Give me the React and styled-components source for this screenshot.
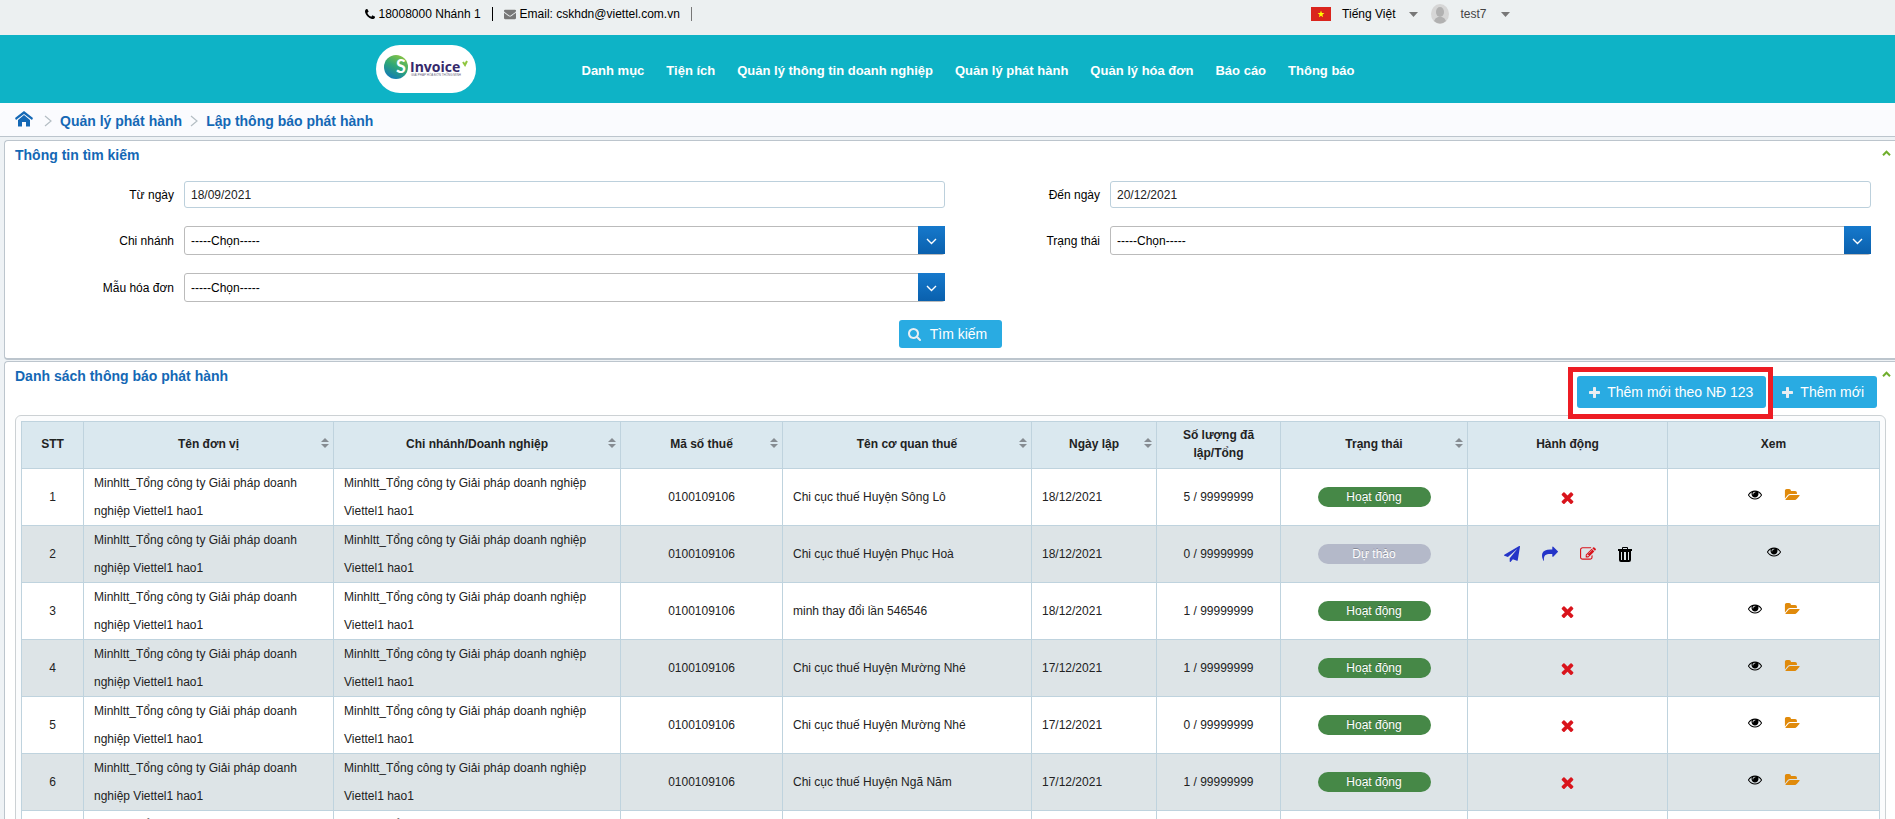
import React from "react";
import styled, { createGlobalStyle } from "styled-components";

const GlobalStyle = createGlobalStyle`
  *, *::before, *::after { box-sizing: border-box; }
  body {
    margin: 0;
    background: #eef2f5;
    color: #000;
    font: 12px/20px "Liberation Sans", Arial, sans-serif;
  }
  button, input, select { font: inherit; color: inherit; }
  a { color: inherit; text-decoration: none; }
`;

/* ---------- icons ---------- */

const Glyph = styled.svg`
  display: block;
  flex: none;
  width: ${(p) => p.$w || p.$size}px;
  height: ${(p) => p.$size}px;
  fill: currentColor;
`;

const PATHS = {
  phone:
    "M1600 1240q0 27-10 70.5t-21 68.5q-21 50-122 106-94 51-186 51-27 0-53-3.5t-57.5-12.5-47-14.5-55.5-20.5-49-18q-98-35-175-83-127-79-264-216t-216-264q-48-77-83-175-3-9-18-49t-20.5-55.5-14.5-47-12.5-57.5-3.5-53q0-92 51-186 56-101 106-122 25-11 68.5-21t70.5-10q14 0 21 3 18 6 53 76 11 19 30 54t35 63.5 31 53.5q3 4 17.5 25t21.5 35.5 7 28.5q0 20-28.5 50t-62 55-62 53-28.5 46q0 9 5 22.5t8.5 20.5 14 24 11.5 19q76 137 174 235t235 174q2 1 19 11.5t24 14 20.5 8.5 22.5 5q18 0 46-28.5t53-62 55-62 50-28.5q14 0 28.5 7t35.5 21.5 25 17.5q25 15 53.5 31t63.5 35 54 30q70 35 76 53 3 7 3 21z",
  envelope:
    "M1792 710v794q0 66-47 113t-113 47h-1472q-66 0-113-47t-47-113v-794q44 49 101 87 362 246 497 345 57 42 92.5 65.5t94.5 48 110 24.5h2q51 0 110-24.5t94.5-48 92.5-65.5q170-123 498-345 57-39 100-87zm0-294q0 79-49 151t-122 123q-376 261-468 325-10 7-42.5 31t-54 38.5-52 32.5-57.5 27-50 9h-2q-23 0-50-9t-57.5-27-52-32.5-54-38.5-42.5-31q-91-64-262-182.5t-205-142.5q-62-42-117-115.5t-55-136.5q0-78 41.5-130t118.5-52h1472q65 0 112.5 47t47.5 113z",
  search:
    "M1216 832q0-185-131.5-316.5t-316.5-131.5-316.5 131.5-131.5 316.5 131.5 316.5 316.5 131.5 316.5-131.5 131.5-316.5zm512 832q0 52-38 90t-90 38q-54 0-90-38l-343-342q-179 124-399 124-143 0-273.5-55.5t-225-150-150-225-55.5-273.5 55.5-273.5 150-225 225-150 273.5-55.5 273.5 55.5 225 150 150 225 55.5 273.5q0 220-124 399l343 343q37 37 37 90z",
  plus:
    "M1600 736v192q0 40-28 68t-68 28h-416v416q0 40-28 68t-68 28h-192q-40 0-68-28t-28-68v-416h-416q-40 0-68-28t-28-68v-192q0-40 28-68t68-28h416v-416q0-40 28-68t68-28h192q40 0 68 28t28 68v416h416q40 0 68 28t28 68z",
  times:
    "M1490 1322q0 40-28 68l-136 136q-28 28-68 28t-68-28l-294-294-294 294q-28 28-68 28t-68-28l-136-136q-28-28-28-68t28-68l294-294-294-294q-28-28-28-68t28-68l136-136q28-28 68-28t68 28l294 294 294-294q28-28 68-28t68 28l136 136q28 28 28 68t-28 68l-294 294 294 294q28 28 28 68z",
  eye:
    "M1664 960q-152-236-381-353 61 104 61 225 0 185-131.5 316.5t-316.5 131.5-316.5-131.5-131.5-316.5q0-121 61-225-229 117-381 353 133 205 333.5 326.5t434.5 121.5 434.5-121.5 333.5-326.5zm-720-384q0-20-14-34t-34-14q-125 0-214.5 89.5t-89.5 214.5q0 20 14 34t34 14 34-14 14-34q0-86 61-147t147-61q20 0 34-14t14-34zm848 384q0 34-20 69-140 230-376.5 368.5t-499.5 138.5-499.5-139-376.5-368q-20-35-20-69t20-69q140-229 376.5-368t499.5-139 499.5 139 376.5 368q20 35 20 69z",
  folder:
    "M1943 952q0 31-31 66l-336 396q-43 51-120.5 86.5t-143.5 35.5h-1088q-34 0-60.5-13t-26.5-43q0-31 31-66l336-396q43-51 120.5-86.5t143.5-35.5h1088q34 0 60.5 13t26.5 43zm-343-344v160h-832q-94 0-197 47.5t-164 119.5l-337 396-5 6q0-4-.5-12.5t-.5-12.5v-960q0-92 66-158t158-66h320q92 0 158 66t66 158v32h544q92 0 158 66t66 158z",
  plane:
    "M1764 11q33 24 27 64l-256 1536q-5 29-32 45-14 8-31 8-11 0-24-5l-453-185-242 295q-18 23-49 23-13 0-22-4-19-7-30.5-23.5t-11.5-36.5v-349l864-1059-1069 925-395-162q-37-14-40-55-2-40 32-59l1664-960q15-9 32-9 20 0 36 11z",
  share:
    "M1792 640q0 26-19 45l-512 512q-19 19-45 19t-45-19-19-45v-256h-224q-98 0-175.5 6t-154 21.5-133 42.5-105.5 69.5-80 101-48.5 138.5-17.5 181q0 55 5 123 0 6 2.5 23.5t2.5 26.5q0 15-8.5 25t-23.5 10q-16 0-28-17-7-9-13-22t-13.5-30-10.5-24q-127-285-127-451 0-199 53-333 162-403 875-403h224v-256q0-26 19-45t45-19 45 19l512 512q19 19 19 45z",
  edit:
    "M888 1184l116-116-152-152-116 116v56h96v96h56zm440-720q-16-16-33 1l-350 350q-17 17-1 33t33-1l350-350q17-17 1-33zm80 594v190q0 119-84.5 203.5t-203.5 84.5h-832q-119 0-203.5-84.5t-84.5-203.5v-832q0-119 84.5-203.5t203.5-84.5h832q63 0 117 25 15 7 18 23 3 17-9 29l-49 49q-14 14-32 8-23-6-45-6h-832q-66 0-113 47t-47 113v832q0 66 47 113t113 47h832q66 0 113-47t47-113v-126q0-13 9-22l64-64q15-15 35-7t20 29zm-96-738l288 288-672 672h-288v-288zm444 132l-92 92-288-288 92-92q28-28 68-28t68 28l152 152q28 28 28 68t-28 68z",
};

const BOXES = {
  phone: "192 128 1408 1408",
  envelope: "0 0 1792 1792",
  search: "64 128 1664 1664",
  plus: "192 128 1408 1408",
  times: "302 238 1188 1316",
  eye: "0 64 1792 1792",
  folder: "0 0 1943 1792",
  plane: "0 0 1792 1792",
  share: "0 0 1792 1792",
  edit: "0 0 1792 1792",
};

const Icon = ({ name, size, w }) => (
  <Glyph $size={size} $w={w} viewBox={BOXES[name]} aria-hidden="true">
    <path d={PATHS[name]} />
  </Glyph>
);

const TrashIcon = () => (
  <Glyph $w={14} $size={15} viewBox="0 0 14 15" aria-hidden="true">
    <path d="M4 2V1q0-1 1-1h4q1 0 1 1v1h4v2H0V2zm1 0h4V1H5z" />
    <path
      fillRule="evenodd"
      d="M1 4h12v9q0 2-2 2H3q-2 0-2-2zM3 5v8h1V5zm3 0v8h2V5zm4 0v8h1V5z"
    />
  </Glyph>
);

const HomeIcon = () => (
  <Glyph $w={18} $size={16} viewBox="0 0 18 16" aria-hidden="true">
    <path d="M9 0 0 7l1 2 8-6 8 6 1-2z" />
    <path d="M9 4 3 9v6.500h4V11h4v4.500h4V9z" />
  </Glyph>
);

const Separator = () => (
  <Glyph $w={8} $size={12} viewBox="0 0 8 12" aria-hidden="true">
    <path d="M1 1l6 5-6 5" fill="none" stroke="#b4bec4" strokeWidth="1.200" />
  </Glyph>
);

const Caret = () => (
  <Glyph $w={9} $size={5} viewBox="0 0 9 5" aria-hidden="true">
    <path d="M0 0h9L4.500 5z" fill="#777" />
  </Glyph>
);

const Flag = () => (
  <Glyph $w={20} $size={14} viewBox="0 0 20 14" role="img" aria-label="Việt Nam">
    <path d="M0 0h20v14H0z" fill="#da251d" />
    <path
      d="M10 3.600l.9 2.500h2.500l-2 1.600.7 2.600-2.100-1.500-2.100 1.500.7-2.600-2-1.600h2.500z"
      fill="#ff0"
    />
  </Glyph>
);

const Avatar = () => (
  <Glyph $w={18} $size={20} viewBox="0 0 18 20" aria-hidden="true">
    <ellipse cx="9" cy="10" rx="9" ry="10" fill="#d6d6d6" />
    <ellipse cx="9" cy="8" rx="4" ry="5" fill="#b1b1b1" />
    <path d="M3 17q1-3 4-4h4q3 1 4 4-6 5-12 0z" fill="#b1b1b1" />
  </Glyph>
);

const Logo = () => (
  <svg width="84" height="30" viewBox="0 0 84 30" role="img" aria-label="SInvoice">
    <defs>
      <linearGradient id="ball" x1="0.8" y1="0" x2="0.3" y2="1">
        <stop offset="0" stopColor="#8fc63f" />
        <stop offset="0.5" stopColor="#2fa876" />
        <stop offset="1" stopColor="#1279b8" />
      </linearGradient>
    </defs>
    <circle cx="12" cy="14" r="12" fill="url(#ball)" />
    <text x="12" y="20" fontFamily="Lato, sans-serif" fontSize="18" fontWeight="700" fill="#fff">
      S
    </text>
    <text x="26" y="19" fontFamily="Open Sans, sans-serif" fontSize="14" fontWeight="700" fill="#35296b">
      Invoice
    </text>
    <path d="M79 9l2 3 2-4" fill="none" stroke="#8fc63f" strokeWidth="2" />
    <text x="27" y="23" fontFamily="Liberation Sans, sans-serif" fontSize="3" fill="#6a6a80">
      GIẢI PHÁP HÓA ĐƠN THÔNG MINH
    </text>
  </svg>
);

/* ---------- header ---------- */

const TopBar = styled.div`
  height: 35px;
  background: #ecf0f1;
`;

const Container = styled.div`
  display: flex;
  max-width: 1170px;
  margin: 0 auto;
  padding: 0 23px 0 2px;
`;

const TopRow = styled(Container)`
  justify-content: space-between;
  padding-top: 4px;
`;

const TopGroup = styled.div`
  display: flex;
  align-items: center;
  gap: ${(p) => p.$gap}px;
`;

const Contact = styled.a`
  display: flex;
  align-items: center;
  gap: 4px;
`;

const Muted = styled.span`
  color: #777;
`;

const Divider = styled.span`
  width: 1px;
  height: 14px;
  background: ${(p) => p.$color};
`;

const MenuButton = styled.button`
  display: flex;
  align-items: center;
  gap: 14px;
  padding: 0;
  border: 0;
  background: none;
  color: ${(p) => p.$color};
`;

const MenuLabel = styled.span`
  display: flex;
  align-items: center;
  gap: 11px;
`;

const NavBar = styled.header`
  background: #0eb3c6;
`;

const NavRow = styled(Container)`
  align-items: center;
  height: 68px;
  padding-left: 13px;
`;

const LogoLink = styled.a`
  display: flex;
  justify-content: center;
  width: 100px;
  height: 48px;
  padding-top: 8px;
  border-radius: 24px;
  background: #fff;
`;

const Nav = styled.nav`
  display: flex;
  gap: 22px;
  margin-left: 106px;
  padding-top: 3px;
  color: #fff;
  font-size: 13px;
  font-weight: bold;
  white-space: nowrap;
`;

const Breadcrumb = styled.nav`
  display: flex;
  align-items: center;
  gap: 8px;
  height: 34px;
  padding: 3px 15px 0;
  border-bottom: 1px solid #bcc5cd;
  background: #fafbfe;
  color: #1468b5;
  font-size: 14px;
  font-weight: bold;
`;

const HomeLink = styled.a`
  margin: 0 3px 4px 0;
`;

/* ---------- panels ---------- */

const Main = styled.main`
  display: grid;
  gap: 1px;
  padding: 3px 0 0 4px;
`;

const Panel = styled.section`
  padding: 0 9px 10px 10px;
  border: solid #bcc5cd;
  border-width: 1px 0 2px 1px;
  border-radius: 4px 0 0 4px;
  background: #fff;
`;

const PanelHead = styled.div`
  display: flex;
  align-items: flex-start;
  justify-content: space-between;
  padding: 4px 0 6px;
  margin-right: -5px;
`;

const PanelTitle = styled.h2`
  margin: 0;
  color: #1468b5;
  font-size: 14px;
  line-height: 20px;
`;

const Toggle = styled.button`
  display: flex;
  padding: 5px 0;
  border: 0;
  background: none;
`;

const CollapseToggle = () => (
  <Toggle aria-label="Thu gọn">
    <Glyph $w={9} $size={6} viewBox="0 0 9 6">
      <path d="M1 5.200l3.500-3.500L8 5.200" fill="none" stroke="#6fae2c" strokeWidth="2" />
    </Glyph>
  </Toggle>
);

const Form = styled.form`
  display: grid;
  grid-template-columns: 1fr 1fr;
  row-gap: 18px;
  padding: 10px 15px 0 4px;
`;

const Field = styled.div`
  display: grid;
  grid-template-columns: 165px 1fr;
  align-items: center;
  grid-column: ${(p) => p.$col || "auto"};
`;

const Label = styled.label`
  padding-right: 10px;
  text-align: right;
`;

const Input = styled.input`
  width: 100%;
  height: 27px;
  padding: 0 6px;
  border: 1px solid #bcd0dc;
  border-radius: 3px;
  background: #fff;
  color: #222;
`;

const SelectWrap = styled.div`
  position: relative;
`;

const Select = styled.select`
  display: block;
  width: 100%;
  height: 29px;
  padding: 0 34px 0 6px;
  border: 1px solid #bbb;
  border-radius: 3px;
  background: #fff;
  appearance: none;
`;

const SelectArrow = styled.span`
  position: absolute;
  top: 0;
  right: 0;
  bottom: 1px;
  display: grid;
  place-items: center;
  width: 27px;
  padding-top: 3px;
  background: linear-gradient(#1679cc, #0a60ad);
  pointer-events: none;
`;

const Dropdown = ({ id }) => (
  <SelectWrap>
    <Select id={id}>
      <option>-----Chọn-----</option>
    </Select>
    <SelectArrow>
      <Glyph $w={11} $size={7} viewBox="0 0 11 7" aria-hidden="true">
        <path d="M1 1l4.500 4.500L10 1" fill="none" stroke="#fff" strokeWidth="1.400" />
      </Glyph>
    </SelectArrow>
  </SelectWrap>
);

const FormActions = styled.div`
  display: flex;
  justify-content: center;
  grid-column: 1 / -1;
  padding-left: 11px;
`;

const Button = styled.button`
  display: flex;
  align-items: center;
  gap: ${(p) => (p.$compact ? 9 : 7)}px;
  height: ${(p) => (p.$compact ? 28 : 32)}px;
  padding: ${(p) => (p.$compact ? "0 15px 0 9px" : "0 13px 0 12px")};
  border: 0;
  border-radius: 3px;
  background: #29abe2;
  color: #fff;
  font-size: 14px;
  white-space: nowrap;

  svg { color: #e9eef2; }
`;

const ListActions = styled.div`
  display: flex;
  justify-content: flex-end;
  gap: 4px;
  margin: -16px 9px 7px 0;
`;

const Highlight = styled.div`
  position: relative;

  &::after {
    content: "";
    position: absolute;
    z-index: 1;
    inset: -9px -7px -11px -9px;
    border: 5px solid #ed1c24;
    pointer-events: none;
  }
`;

/* ---------- table ---------- */

const TableFrame = styled.div`
  padding: 5px;
  border: 1px solid #ccd1d4;
  border-radius: 6px;
  background: #fbfcfd;
`;

const Table = styled.table`
  width: 100%;
  border-collapse: collapse;
  table-layout: fixed;
  color: #222;
`;

const Th = styled.th`
  position: relative;
  height: 47px;
  padding: 0 16px 3px;
  border: 1px solid #bfd3de;
  background: #dae8ef;
  line-height: 18px;
`;

const SortIcon = styled.svg`
  position: absolute;
  top: 16px;
  right: 4px;
  width: 8px;
  height: 10px;
  fill: #868c92;
`;

const Row = styled.tr`
  background: #fff;

  &:nth-child(even) { background: #dde4e7; }
`;

const Td = styled.td`
  height: 57px;
  padding: 0 10px;
  border: 1px solid #bfd3de;
  line-height: 28px;
  text-align: ${(p) => p.$align || "left"};
`;

const Badge = styled.span`
  display: block;
  width: 113px;
  margin: 0 auto;
  border-radius: 10px;
  background: ${(p) => (p.$draft ? "#b4b9c9" : "#468847")};
  color: #fff;
  line-height: 20px;
  text-shadow: 0 -1px 0 rgba(0, 0, 0, 0.25);
`;

const IconRow = styled.div`
  display: flex;
  align-items: center;
  justify-content: center;
  gap: ${(p) => p.$gap}px;
  padding-bottom: ${(p) => p.$raise || 0}px;
`;

const IconButton = styled.button`
  display: block;
  padding: 0;
  border: 0;
  background: none;
  color: ${(p) => p.$color};
`;

const NAV = [
  "Danh mục",
  "Tiện ích",
  "Quản lý thông tin doanh nghiệp",
  "Quản lý phát hành",
  "Quản lý hóa đơn",
  "Báo cáo",
  "Thông báo",
];

const COLUMNS = [
  { title: "STT", width: 62 },
  { title: "Tên đơn vị", width: 250, sort: true },
  { title: "Chi nhánh/Doanh nghiệp", width: 287, sort: true },
  { title: "Mã số thuế", width: 162, sort: true },
  { title: "Tên cơ quan thuế", width: 249, sort: true },
  { title: "Ngày lập", width: 125, sort: true },
  { title: "Số lượng đã lập/Tổng", width: 124 },
  { title: "Trạng thái", width: 187, sort: true },
  { title: "Hành động", width: 200 },
  { title: "Xem", width: 212 },
];

const COMPANY = "Minhltt_Tổng công ty Giải pháp doanh nghiệp Viettel1 hao1";

const ROWS = [
  { office: "Chi cục thuế Huyện Sông Lô", date: "18/12/2021", count: 5 },
  { office: "Chi cục thuế Huyện Phục Hoà", date: "18/12/2021", count: 0, draft: true },
  { office: "minh thay đổi lần 546546", date: "18/12/2021", count: 1 },
  { office: "Chi cục thuế Huyện Mường Nhé", date: "17/12/2021", count: 1 },
  { office: "Chi cục thuế Huyện Mường Nhé", date: "17/12/2021", count: 0 },
  { office: "Chi cục thuế Huyện Ngã Năm", date: "17/12/2021", count: 1 },
  { office: "Chi cục thuế Huyện Ngã Năm", date: "17/12/2021", count: 1 },
];

const NoticeRow = ({ index, row }) => (
  <Row>
    <Td $align="center">{index}</Td>
    <Td>{COMPANY}</Td>
    <Td>{COMPANY}</Td>
    <Td $align="center">0100109106</Td>
    <Td>{row.office}</Td>
    <Td>{row.date}</Td>
    <Td $align="center">{row.count} / 99999999</Td>
    <Td $align="center">
      <Badge $draft={row.draft}>{row.draft ? "Dự thảo" : "Hoạt động"}</Badge>
    </Td>
    <Td>
      {row.draft ? (
        <IconRow $gap={22}>
          <IconButton $color="#2434c8" aria-label="Gửi"><Icon name="plane" size={16} /></IconButton>
          <IconButton $color="#2434c8" aria-label="Chuyển tiếp"><Icon name="share" size={16} /></IconButton>
          <IconButton $color="#d9141c" aria-label="Sửa"><Icon name="edit" size={16} /></IconButton>
          <IconButton $color="#000" aria-label="Xóa"><TrashIcon /></IconButton>
        </IconRow>
      ) : (
        <IconRow $gap={22}>
          <IconButton $color="#d9141c" aria-label="Hủy"><Icon name="times" size={13} /></IconButton>
        </IconRow>
      )}
    </Td>
    <Td>
      <IconRow $gap={22} $raise={5}>
        <IconButton $color="#000" aria-label="Xem"><Icon name="eye" size={14} /></IconButton>
        {!row.draft && (
          <IconButton $color="#e08a0b" aria-label="Mở tệp"><Icon name="folder" size={14} w={16} /></IconButton>
        )}
      </IconRow>
    </Td>
  </Row>
);

export default function App() {
  return (
    <>
      <GlobalStyle />
      <TopBar>
        <TopRow>
          <TopGroup $gap={11}>
            <Contact href="#phone">
              <Icon name="phone" size={10} />
              18008000 Nhánh 1
            </Contact>
            <Divider $color="#000" />
            <Contact href="#email">
              <Muted><Icon name="envelope" size={12} /></Muted>
              Email: cskhdn@viettel.com.vn
            </Contact>
            <Divider $color="#777" />
          </TopGroup>
          <TopGroup $gap={13}>
            <MenuButton $color="#000">
              <MenuLabel><Flag />Tiếng Việt</MenuLabel>
              <Caret />
            </MenuButton>
            <MenuButton $color="#444">
              <MenuLabel><Avatar />test7</MenuLabel>
              <Caret />
            </MenuButton>
          </TopGroup>
        </TopRow>
      </TopBar>

      <NavBar>
        <NavRow>
          <LogoLink href="#home"><Logo /></LogoLink>
          <Nav>
            {NAV.map((item) => (
              <a key={item} href="#menu">{item}</a>
            ))}
          </Nav>
        </NavRow>
      </NavBar>

      <Breadcrumb>
        <HomeLink href="#home" aria-label="Trang chủ"><HomeIcon /></HomeLink>
        <Separator />
        <a href="#publish">Quản lý phát hành</a>
        <Separator />
        <a href="#notice">Lập thông báo phát hành</a>
      </Breadcrumb>

      <Main>
        <Panel>
          <PanelHead>
            <PanelTitle>Thông tin tìm kiếm</PanelTitle>
            <CollapseToggle />
          </PanelHead>
          <Form onSubmit={(e) => e.preventDefault()}>
            <Field>
              <Label htmlFor="from">Từ ngày</Label>
              <Input id="from" defaultValue="18/09/2021" />
            </Field>
            <Field>
              <Label htmlFor="to">Đến ngày</Label>
              <Input id="to" defaultValue="20/12/2021" />
            </Field>
            <Field>
              <Label htmlFor="branch">Chi nhánh</Label>
              <Dropdown id="branch" />
            </Field>
            <Field>
              <Label htmlFor="status">Trạng thái</Label>
              <Dropdown id="status" />
            </Field>
            <Field $col="1">
              <Label htmlFor="template">Mẫu hóa đơn</Label>
              <Dropdown id="template" />
            </Field>
            <FormActions>
              <Button $compact type="submit">
                <Icon name="search" size={13} />
                Tìm kiếm
              </Button>
            </FormActions>
          </Form>
        </Panel>

        <Panel>
          <PanelHead>
            <PanelTitle>Danh sách thông báo phát hành</PanelTitle>
            <CollapseToggle />
          </PanelHead>
          <ListActions>
            <Highlight>
              <Button><Icon name="plus" size={11} />Thêm mới theo NĐ 123</Button>
            </Highlight>
            <Button><Icon name="plus" size={11} />Thêm mới</Button>
          </ListActions>
          <TableFrame>
            <Table>
              <colgroup>
                {COLUMNS.map((c) => (
                  <col key={c.title} width={c.width} />
                ))}
              </colgroup>
              <thead>
                <tr>
                  {COLUMNS.map((c) => (
                    <Th key={c.title} scope="col">
                      {c.title}
                      {c.sort && (
                        <SortIcon viewBox="0 0 8 10" aria-hidden="true">
                          <path d="M0 4l4-4 4 4zM0 6h8l-4 4z" />
                        </SortIcon>
                      )}
                    </Th>
                  ))}
                </tr>
              </thead>
              <tbody>
                {ROWS.map((row, i) => (
                  <NoticeRow key={i} index={i + 1} row={row} />
                ))}
              </tbody>
            </Table>
          </TableFrame>
        </Panel>
      </Main>
    </>
  );
}
